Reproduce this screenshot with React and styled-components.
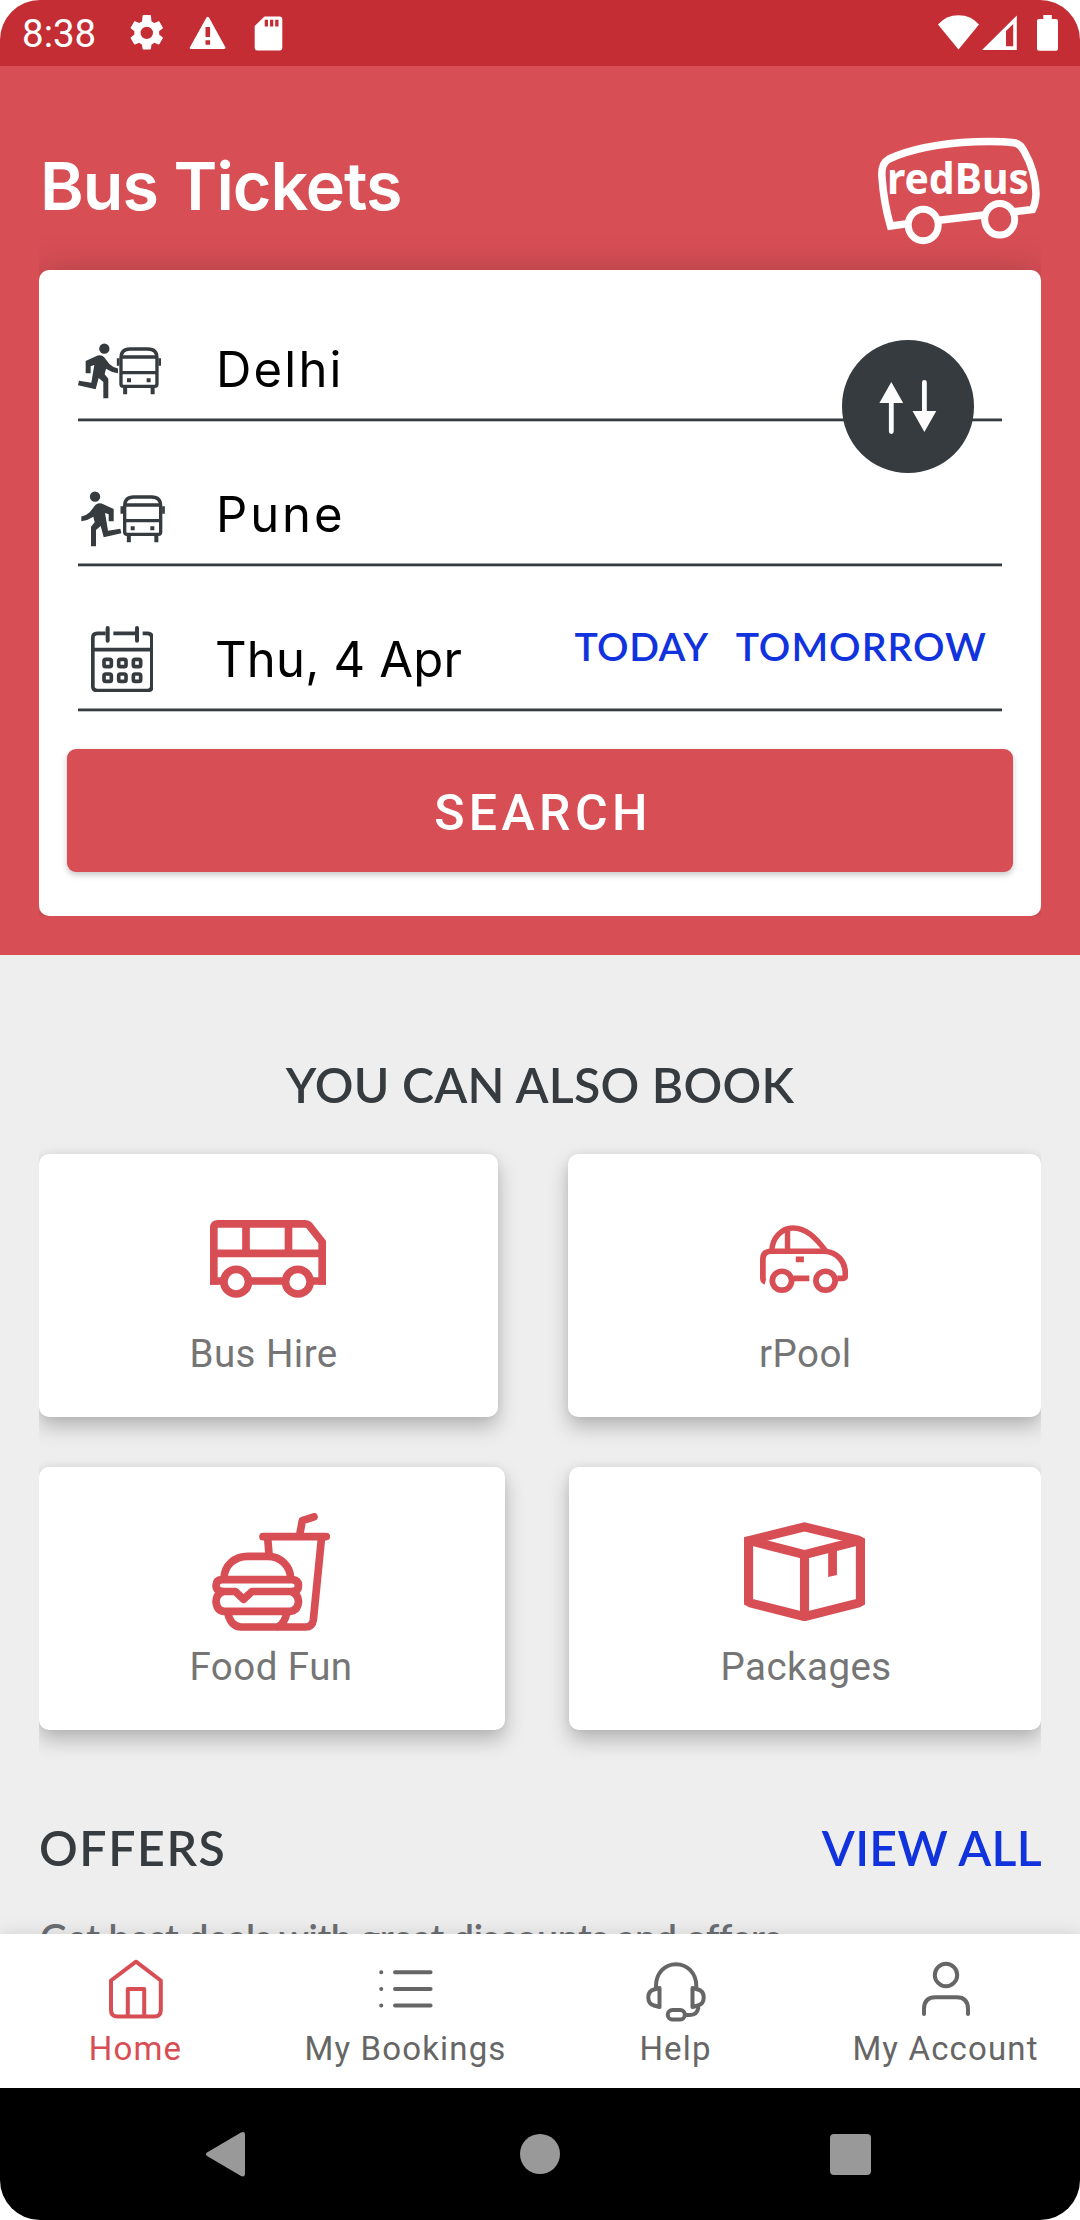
import React from "react";
import styled, { createGlobalStyle, css } from "styled-components";

const red = "#d84e55";
const ink = "#363b3f";
const blue = "#1033dd";
const grey = "#666666";

const GlobalStyle = createGlobalStyle`
  body { margin: 0; background: #fff; }
  *, *::before, *::after { box-sizing: border-box; }
  svg { display: block; flex: none; }
`;

const geometric = css`font-family: Inter, "Liberation Sans", sans-serif;`;
const capitals = css`font-family: Lato, "Liberation Sans", sans-serif; font-weight: 600;`;
const roboto = css`font-family: Roboto, "Liberation Sans", sans-serif;`;

const Phone = styled.div`
  display: flex;
  flex-direction: column;
  width: 1080px;
  height: 2220px;
  overflow: hidden;
  border-radius: 40px;
  background: #eeeeee;
`;

/* ---------- status bar ---------- */

const StatusBar = styled.header`
  display: flex;
  align-items: flex-start;
  height: 66px;
  flex: none;
  padding: 13px 21px 0 22px;
  background: #c42d33;
  color: #fff;
`;

const Clock = styled.time`
  ${roboto}
  width: 104px;
  font-size: 38.5px;
  line-height: 42px;
`;

const StatusIcons = styled.div`
  display: flex;
  align-items: flex-start;
  gap: ${(p) => p.$gap}px;
  margin-left: ${(p) => (p.$end ? "auto" : 0)};
`;

/* ---------- search area ---------- */

const Hero = styled.section`
  flex: none;
  height: 889px;
  background: ${red};
`;

const TitleRow = styled.div`
  display: flex;
  justify-content: space-between;
  align-items: flex-start;
  height: 204px;
  padding: 71px 40px 0 40px;
`;

const Title = styled.h1`
  ${geometric}
  margin: 9px 0 0;
  color: #fff;
  font-size: 66.4px;
  font-weight: 600;
  line-height: 80px;
  letter-spacing: -1px;
`;

const LogoText = styled.text`
  font-family: "Noto Sans", "Open Sans", sans-serif;
  font-size: 43px;
  font-weight: 700;
  fill: #fff;
`;

const CardClip = styled.div`
  margin: 0 39px;
  clip-path: inset(-50px 0 0 0);
`;

const SearchCard = styled.form`
  position: relative;
  height: 646px;
  padding: 6px 39px 0;
  border-radius: 10px;
  background: #fff;
  box-shadow: 0 0 34px rgba(60, 40, 45, 0.28);
`;

const Field = styled.div`
  display: flex;
  align-items: flex-start;
  height: 145px;
  border-bottom: 2px solid ${ink};
  box-shadow: 0 1px 0 rgba(54, 59, 63, 0.3), inset 0 -1px 0 rgba(54, 59, 63, 0.5);
`;

const FieldIcon = styled.div`
  width: 138px;
  flex: none;
  padding: ${(p) => p.$top}px 0 0 ${(p) => p.$left}px;
`;

const FieldValue = styled.span`
  ${geometric}
  margin: 64px 0 0 ${(p) => p.$shift || 0}px;
  color: #000;
  font-size: 49px;
  line-height: 60px;
  letter-spacing: ${(p) => p.$spacing}px;
`;

const DayShortcuts = styled.div`
  display: flex;
  gap: 27px;
  margin: 56px 15px 0 auto;
`;

const DayLink = styled.a`
  ${capitals}
  color: ${blue};
  font-size: 39.2px;
  line-height: 48px;
  letter-spacing: ${(p) => p.$spacing}px;
`;

const SwapButton = styled.button`
  position: absolute;
  top: 70px;
  right: 67px;
  width: 132.5px;
  height: 132.5px;
  padding: 0;
  border: 0;
  border-radius: 50%;
  background: ${ink};
`;

const SearchButton = styled.button`
  ${roboto}
  display: block;
  width: 946px;
  height: 123px;
  margin: 38px -11px 0;
  padding: 4px 0 0 6px;
  border: 0;
  border-radius: 9px;
  background: ${red};
  box-shadow: 0 3px 6px rgba(0, 0, 0, 0.22);
  color: #fff;
  font-size: 50px;
  font-weight: 500;
  letter-spacing: 4.4px;
`;

/* ---------- scrolling content ---------- */

const Content = styled.main`
  flex: none;
  height: 979px;
  overflow: hidden;
`;

const SectionTitle = styled.h2`
  ${capitals}
  margin: 0;
  padding-top: ${(p) => p.$top || 0}px;
  color: ${(p) => p.$color || ink};
  font-size: 48.2px;
  line-height: 60px;
  letter-spacing: ${(p) => p.$spacing}px;
  text-align: center;
`;

const TileRows = styled.div`
  display: flex;
  flex-direction: column;
  gap: 50px;
  margin: 40px 39px 0;
  clip-path: inset(-40px 0);
`;

const TileRow = styled.div`
  display: flex;
  justify-content: space-between;
`;

const Tile = styled.article`
  display: flex;
  flex-direction: column;
  align-items: flex-start;
  width: ${(p) => p.$width}px;
  height: 263px;
  border-radius: 10px;
  background: #fff;
  box-shadow: 0 10px 20px rgba(0, 0, 0, 0.24), 0 0 8px rgba(0, 0, 0, 0.06);
`;

const TileIcon = styled.div`
  display: flex;
  align-items: center;
  height: 210px;
  margin-left: ${(p) => p.$left}px;
`;

const TileLabel = styled.span`
  ${roboto}
  margin: -33px 0 0 ${(p) => p.$left}px;
  color: #757575;
  font-size: 38.5px;
  line-height: 46px;
  letter-spacing: 0.45px;
`;

const OffersHeader = styled.div`
  display: flex;
  justify-content: space-between;
  padding: 87.5px 38px 0 39px;
`;

const OffersText = styled.p`
  ${capitals}
  margin: 38px 0 0 40px;
  color: #6b6f73;
  font-size: 37.6px;
  line-height: 46px;
  letter-spacing: -0.38px;
  white-space: nowrap;
`;

/* ---------- bottom bars ---------- */

const TabBar = styled.nav`
  position: relative;
  display: flex;
  flex: none;
  height: 154px;
  background: #fff;
  box-shadow: 0 0 18px rgba(0, 0, 0, 0.12);
`;

const Tab = styled.a`
  ${roboto}
  display: flex;
  flex: 1;
  flex-direction: column;
  align-items: center;
  color: ${(p) => (p.$active ? red : grey)};
  font-size: 33px;
  line-height: 40px;
  letter-spacing: 1.15px;
  padding: 22px 0 0 1px;
  white-space: nowrap;
`;

const TabText = styled.span`
  margin-top: 3px;
`;

const SystemBar = styled.footer`
  display: flex;
  align-items: center;
  justify-content: space-between;
  flex: none;
  height: 132px;
  padding: 0 209px 0 206px;
  background: #000;
`;

/* ---------- drawings ---------- */

const BusFront = () => (
  <g fill="none" stroke={ink} strokeWidth="10">
    <path d="M273 373V293Q273 266 300 266H354Q381 266 381 293V371Q381 378 374 378H280Q273 378 273 371Z" />
    <path d="M273 290H381M273 337H381" />
    <path d="M285.500 380V402M368 380V402" strokeWidth="12" />
    <path d="M264.500 294V316M389.500 294V316" strokeWidth="8" />
    <path d="M291 360H303M350 360H362" strokeWidth="12" />
  </g>
);

const Runner = () => (
  <g fill={ink}>
    <circle cx="223" cy="265" r="15.500" />
    <path d="M167 339V302L203 285.500Q214 282 222 290L239 312Q249 322 264 324.500V338.500Q246 337 228 325L224 342L235 355V414H220V365L206 353L197 387L144 375L147 361L184 367.500L193 314L182 318V339Z" />
  </g>
);

const Boarding = () => (
  <svg width="83.300" height="56" viewBox="144 248 250 168">
    <Runner />
    <BusFront />
  </svg>
);

const Alighting = () => (
  <svg width="83.700" height="56" viewBox="154 694 251 168">
    <g transform="translate(419 446) scale(-1 1)"><Runner /></g>
    <g transform="translate(12 446)"><BusFront /></g>
  </svg>
);

const CalendarIcon = () => (
  <svg width="62.700" height="66.700" viewBox="182 1097 188 200" fill="none" stroke={ink} strokeWidth="11">
    <path d="M226 1119H201Q187.500 1119 187.500 1132V1278Q187.500 1290.500 201 1290.500H351Q364.500 1290.500 364.500 1278V1132Q364.500 1119 351 1119H337M249 1119H314M188 1168H364" />
    <path d="M232 1103V1141M320 1103V1141" strokeWidth="12" strokeLinecap="round" />
    {[1208, 1252].map((y) => [232, 276, 320].map((x) => (
      <rect key={`${x}-${y}`} x={x - 11} y={y - 11} width="22" height="22" rx="5" />
    )))}
  </svg>
);

const SwapIcon = () => (
  <svg width="132.500" height="132.500" viewBox="842 340 132.500 132.500" fill="#fcfcfc" stroke="#fcfcfc">
    <path d="M891.300 382L903.200 403H879.400Z M924.400 432L912.500 411H936.300Z" stroke="none" />
    <path d="M891.300 400V431.500M924.400 382.500V414" strokeWidth="4.800" strokeLinecap="round" />
  </svg>
);

const RedBusLogo = () => (
  <svg width="162" height="109" viewBox="878 137 162 109" fill="none" stroke="#fff">
    <path strokeWidth="7.500" d="M908 223.600L890.500 226Q883.500 202 881.800 175Q881.500 163 889 159Q920 144.500 975 141.800Q1000 141 1014 142.800Q1020 143.500 1024 151Q1036 172 1036 194Q1035.500 204 1032.500 209.500L1014 211.800M939 220.300L984 215" />
    <ellipse cx="923.200" cy="225" rx="15" ry="15.800" strokeWidth="7" />
    <ellipse cx="999.700" cy="219.300" rx="15" ry="15.800" strokeWidth="7" />
    <LogoText x="887" y="194" textLength="142" lengthAdjust="spacingAndGlyphs" stroke="none">redBus</LogoText>
  </svg>
);

const BusHireIcon = () => (
  <svg width="116" height="78" viewBox="90 240 348 234" fill="none" stroke={red} strokeWidth="23">
    <path d="M90 423H101.500V264Q101.500 251.500 114 251.500H376Q383 251.500 388 257L426.500 306V423H438M101.500 423H426.500M101.500 340H426.500M198 252V340M325.500 252V340" />
    <path d="M101.500 423V434.500M426.500 423V434.500" />
    <circle cx="168.500" cy="425" r="37" fill="#fff" />
    <circle cx="353.500" cy="425" r="37" fill="#fff" />
  </svg>
);

const CarIcon = () => (
  <svg width="88.200" height="68" viewBox="621 257 261 205" preserveAspectRatio="none" fill="none" stroke={red} strokeWidth="17">
    <path d="M637 428Q629.500 426 629.500 417V360Q629.500 336 655 336H812C848 338 873.500 366 873.500 404V410Q873.500 418 864 418H850M720 418H767M727 360.500H751" />
    <path d="M656 336C656 296 686 266 718 266C758 266 785 295 815 334M702.500 268V336" strokeWidth="16" />
    <circle cx="686" cy="425" r="28.500" />
    <circle cx="815" cy="425" r="28.500" />
  </svg>
);

const FoodIcon = () => (
  <svg width="118" height="118" viewBox="575 219 354 354" fill="none" stroke={red} strokeWidth="23" strokeLinecap="round" strokeLinejoin="round">
    <path d="M728 290H918M837 290L846 242L881 230.500M742 294L746 342M903.500 294L879 540Q876 561 856 561H662Q632 561 622 518M800 516Q793 552 772 561" />
    <path d="M611 416C611 376 643 349 682 349H742C780 349 811 378 811 416" />
    <path d="M605 419H817Q834.500 421 834.500 437Q834.500 454 815 454.500H695L669.500 478L645 454.500H605Q587 452 587 437Q587 420 605 419Z" />
    <path d="M606 455Q587 464 587 485Q590 514 612 514H809Q832 512 834.500 485Q834 464 815 455" />
  </svg>
);

const PackageIcon = () => (
  <svg width="121" height="99.500" viewBox="571 246 358 299" preserveAspectRatio="none" fill="none" stroke={red} strokeWidth="27">
    <path d="M584.500 302L592 300L750 260.500L908 300L915.500 304V486L909 489.500L750 530.500L591 489.500L584.500 486Z" />
    <path d="M588 302L750 344L912 302M750 344V530" />
    <path d="M820 322L846 316V405L820 411Z" fill={red} stroke="none" />
  </svg>
);

const tabSvg = (x) => ({ width: 66, height: 70, viewBox: `${x} 1956 66 70`, fill: "none", stroke: "currentColor", strokeWidth: 4, strokeLinecap: "round", strokeLinejoin: "round" });

const HomeIcon = () => (
  <svg {...tabSvg(102)}>
    <path d="M110 1980.500L135 1961.700L159.800 1980.500V2010Q159.800 2016.500 153.500 2016.500H116.500Q110 2016.500 110 2010ZM126.800 2016V1989H143.200V2016" />
  </svg>
);

const ListIcon = () => (
  <svg {...tabSvg(372)}>
    <path d="M380.200 1972.300H380.300M380.200 1989H380.300M380.200 2005.500H380.300M394 1972.300H429.600M394 1989H429.600M394 2005.500H429.600" />
  </svg>
);

const HeadsetIcon = () => (
  <svg {...tabSvg(642)}>
    <path d="M655 1988V1986C655 1973 664 1964.200 675 1964.200S695.300 1973 695.300 1986V1988" />
    <path d="M658.500 1988L653 1989.500Q647.300 1991 647.300 1997.500Q647.300 2004 653 2005.500L658.500 2007Z" />
    <path d="M691.500 1988L697 1989.500Q702.700 1991 702.700 1997.500Q702.700 2004 697 2005.500L691.500 2007Z" />
    <path d="M697.300 2008Q696 2015 689 2015H685" />
    <rect x="666.800" y="2010" width="17" height="9.500" rx="4.500" />
  </svg>
);

const PersonIcon = () => (
  <svg {...tabSvg(912)}>
    <circle cx="945" cy="1975" r="11.200" />
    <path d="M923 2014V2009Q923 1997.200 934.500 1997.200H955.500Q967 1997.200 967 2009V2014" />
  </svg>
);

const tabs = [
  { text: "Home", icon: <HomeIcon />, active: true },
  { text: "My Bookings", icon: <ListIcon /> },
  { text: "Help", icon: <HeadsetIcon /> },
  { text: "My Account", icon: <PersonIcon /> },
];

const tileRows = [
  [
    { text: "Bus Hire", icon: <BusHireIcon />, width: 459, iconLeft: 171, textLeft: 150.5 },
    { text: "rPool", icon: <CarIcon />, width: 473, iconLeft: 192, textLeft: 191 },
  ],
  [
    { text: "Food Fun", icon: <FoodIcon />, width: 466, iconLeft: 172.5, textLeft: 150.5 },
    { text: "Packages", icon: <PackageIcon />, width: 472, iconLeft: 174.5, textLeft: 151.5 },
  ],
];

export default function App() {
  return (
    <>
      <GlobalStyle />
      <Phone>
        <StatusBar>
          <Clock>8:38</Clock>
          <StatusIcons $gap={19}>
            <svg width="41.500" height="41.500" viewBox="0 0.500 24 24" fill="#fff">
              <path d="M19.140 12.940c.040-.300.060-.610.060-.940 0-.320-.020-.640-.070-.940l2.030-1.580c.180-.140.230-.410.120-.610l-1.920-3.320c-.120-.220-.370-.290-.590-.220l-2.390.960c-.500-.380-1.030-.700-1.620-.940L14.400 2.010c-.040-.240-.240-.410-.480-.410h-3.840c-.240 0-.430.170-.470.410L9.250 5.350c-.590.240-1.130.570-1.620.940L5.240 5.330c-.220-.080-.470 0-.590.220L2.740 8.870c-.120.210-.080.470.120.610l2.030 1.580c-.050.300-.090.630-.090.940s.020.640.070.940l-2.030 1.580c-.180.140-.230.410-.120.610l1.920 3.320c.120.220.370.290.590.220l2.390-.960c.500.380 1.030.700 1.620.940l.360 2.540c.050.240.240.410.480.410h3.840c.240 0 .440-.170.470-.410l.360-2.540c.590-.240 1.130-.560 1.620-.940l2.390.960c.220.080.470 0 .590-.220l1.920-3.320c.120-.220.070-.470-.120-.610l-2.010-1.580zM12 15.600A3.600 3.600 0 1 1 12 8.400a3.600 3.600 0 0 1 0 7.200z" />
            </svg>
            <svg width="41.500" height="38" viewBox="186.500 13 41.500 38" fill="#fff">
              <path fillRule="evenodd" d="M206 17.600Q207.300 16 208.500 17.600L225 47.500Q225 49 223.500 49H190.500Q189 49 189.300 47.500ZM205 27V37H209.600V27ZM205 40.300V44.800H209.600V40.300Z" />
            </svg>
            <svg width="41.500" height="38" viewBox="247 13 41.500 38" fill="#fff">
              <path fillRule="evenodd" d="M264.500 16.500H279.500Q282.300 16.500 282.300 19.500V47.500Q282.300 50.500 279.500 50.500H257.500Q254.700 50.500 254.700 47.500V26ZM264.700 19.800V26.500H268V19.800ZM270 19.800V26.500H273.300V19.800ZM275.200 19.800V26.500H278.500V19.800Z" />
            </svg>
          </StatusIcons>
          <StatusIcons $end $gap={0}>
            <svg width="122" height="38" viewBox="937 13 122 38" fill="#fff">
              <path d="M938 24.500Q946 15.300 958.500 15.300T979 24.500L958.500 49.500Z" />
              <path fillRule="evenodd" d="M982 50L1016.800 15.500V50ZM1006 31V46.200H1013.200V24Z" />
              <path d="M1043.300 15H1051.800V19H1056Q1058 19 1058 21V48.800Q1058 50.800 1056 50.800H1039Q1037 50.800 1037 48.800V21Q1037 19 1039 19H1043.300Z" />
            </svg>
          </StatusIcons>
        </StatusBar>

        <Hero>
          <TitleRow>
            <Title>Bus Tickets</Title>
            <RedBusLogo />
          </TitleRow>
          <CardClip>
            <SearchCard>
              <Field>
                <FieldIcon $top={66.5} $left={0}><Boarding /></FieldIcon>
                <FieldValue $spacing={2.2}>Delhi</FieldValue>
              </Field>
              <Field>
                <FieldIcon $top={70} $left={3.3}><Alighting /></FieldIcon>
                <FieldValue $spacing={2.9}>Pune</FieldValue>
              </Field>
              <Field>
                <FieldIcon $top={59.5} $left={12.5}><CalendarIcon /></FieldIcon>
                <FieldValue $spacing={0.2} $shift={-1}>Thu, 4 Apr</FieldValue>
                <DayShortcuts>
                  <DayLink $spacing={0.5}>TODAY</DayLink>
                  <DayLink $spacing={1}>TOMORROW</DayLink>
                </DayShortcuts>
              </Field>
              <SearchButton type="button">SEARCH</SearchButton>
              <SwapButton type="button" aria-label="Swap cities"><SwapIcon /></SwapButton>
            </SearchCard>
          </CardClip>
        </Hero>

        <Content>
          <SectionTitle $top={98.5} $spacing={0.25}>YOU CAN ALSO BOOK</SectionTitle>
          <TileRows>
            {tileRows.map((row, i) => (
              <TileRow key={i}>
                {row.map((t) => (
                  <Tile key={t.text} $width={t.width}>
                    <TileIcon $left={t.iconLeft}>{t.icon}</TileIcon>
                    <TileLabel $left={t.textLeft}>{t.text}</TileLabel>
                  </Tile>
                ))}
              </TileRow>
            ))}
          </TileRows>
          <OffersHeader>
            <SectionTitle $spacing={1.6}>OFFERS</SectionTitle>
            <SectionTitle as="a" $color={blue} $spacing={0.3}>VIEW ALL</SectionTitle>
          </OffersHeader>
          <OffersText>Get best deals with great discounts and offers</OffersText>
        </Content>

        <TabBar>
          {tabs.map((t) => (
            <Tab key={t.text} $active={t.active}>
              {t.icon}
              <TabText>{t.text}</TabText>
            </Tab>
          ))}
        </TabBar>

        <SystemBar>
          <svg width="39" height="46" viewBox="206 2131 39 46" fill="#999">
            <path d="M207 2152.500L241 2132.500Q245 2131 245 2135V2173.500Q245 2177.500 241 2176L207 2156Q205 2154.300 207 2152.500Z" />
          </svg>
          <svg width="45" height="40" viewBox="0 0 45 40" fill="#999"><circle cx="25" cy="20" r="20" /></svg>
          <svg width="41" height="41" viewBox="0 0 41 41" fill="#999"><rect width="41" height="41" rx="4" /></svg>
        </SystemBar>
      </Phone>
    </>
  );
}
